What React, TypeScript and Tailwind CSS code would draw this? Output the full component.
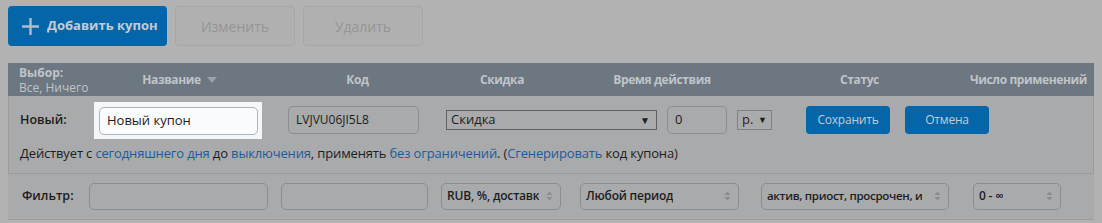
import React from "react";

const font = { fontFamily: '"Open Sans", "Noto Sans", sans-serif' };

function UpDown() {
  return (
    <svg width="7" height="10" viewBox="0 0 7 10" className="shrink-0">
      <path d="M0.5 4 L3.5 0.5 L6.5 4 Z" fill="#8a8d90" />
      <path d="M0.5 6 L3.5 9.5 L6.5 6 Z" fill="#8a8d90" />
    </svg>
  );
}

function FilterSelect({
  text,
  className,
  textClass = "",
}: {
  text: string;
  className: string;
  textClass?: string;
}) {
  return (
    <div
      className={
        "flex h-[27px] items-center justify-between gap-[4px] rounded-[5px] border border-[#8b8e91] pl-[5px] pr-[7px] text-[12px] font-semibold tracking-[-0.2px] text-[#1d1d1d] " +
        className
      }
    >
      <span className={"overflow-hidden whitespace-nowrap " + textClass}>{text}</span>
      <UpDown />
    </div>
  );
}

export default function App() {
  return (
    <div className="min-h-[223px] w-full bg-[#b2b2b2] px-2 pt-[6px]" style={font}>
      {/* Кнопки */}
      <div className="flex gap-2">
        <button className="flex h-[40px] w-[159px] items-center gap-[8px] rounded-[4px] bg-[#0565a9] pl-[14px] text-[13px] font-bold text-[#c3ccd5]">
          <svg width="17" height="17" viewBox="0 0 17 17">
            <path d="M8.5 0 V17 M0 8.5 H17" stroke="#aebccb" strokeWidth="2.4" />
          </svg>
          Добавить купон
        </button>
        <button className="h-[40px] w-[120px] rounded-[4px] border border-[#a6a6a6] bg-[#b0b0b0] text-[14px] text-[#959595]">
          Изменить
        </button>
        <button className="h-[40px] w-[120px] rounded-[4px] border border-[#a6a6a6] bg-[#b0b0b0] text-[14px] text-[#959595]">
          Удалить
        </button>
      </div>

      {/* Заголовок таблицы */}
      <div className="mt-[17px] flex h-[33px] items-center bg-[#6d7782] text-[12px] font-bold tracking-[-0.4px] text-[#bfc4c9]">
        <div className="w-[100px] pl-[11px] leading-[15px] tracking-normal">
          <div className="font-bold">Выбор:</div>
          <div className="font-normal">Все, Ничего</div>
        </div>
        <div className="flex w-[143px] items-center justify-center gap-[6px]">
          Название
          <svg width="10" height="6" viewBox="0 0 10 6">
            <path d="M0 0 H10 L5 6 Z" fill="#9aa3ab" />
          </svg>
        </div>
        <div className="w-[213px] text-center">Код</div>
        <div className="w-[76px] text-center">Скидка</div>
        <div className="w-[244px] text-center">Время действия</div>
        <div className="w-[151px] text-center">Статус</div>
        <div className="flex-1 pr-[7px] text-right">Число применений</div>
      </div>

      {/* Новый купон */}
      <div className="h-[78px] border-x border-b border-[#9a9c9e] bg-[#a9aaab] pl-[11px] pt-[5px] text-[13px] text-[#1d1d1d]">
        <div className="flex h-[38px] items-center">
          <div className="w-[74px] text-[12.5px] font-semibold">Новый:</div>
          <div className="w-[168px] bg-[#f5f6f7] pb-[4px] pl-[5px] pr-[4px] pt-[5px]">
            <div className="flex h-[28px] items-center rounded-[5px] border border-[#a9b5c1] bg-[#fafbfc] px-[7px] text-[#1a1a1a]">
              Новый купон
            </div>
          </div>
          <div className="ml-[26px] flex h-[28px] w-[131px] items-center rounded-[5px] border border-[#8b8e91] px-[7px] text-[12px] text-[#1d1d1d]">
            LVJVU06JI5L8
          </div>
          <div className="ml-[27px] flex h-[20px] w-[211px] items-center justify-between border border-[#5e6163] pl-[4px] pr-[6px]">
            <span>Скидка</span>
            <span className="text-[10px]">▼</span>
          </div>
          <div className="ml-[10px] flex h-[28px] w-[60px] items-center rounded-[5px] border border-[#8b8e91] px-[7px]">
            0
          </div>
          <div className="ml-[10px] flex h-[20px] w-[35px] items-center justify-between border border-[#808385] pl-[4px] pr-[4px]">
            <span className="text-[#3a1530]">р.</span>
            <span className="text-[9px]">▼</span>
          </div>
          <button className="ml-[34px] h-[28px] w-[84px] rounded-[4px] bg-[#0565a9] text-[12px] tracking-[-0.2px] text-[#c3ccd5]">
            Сохранить
          </button>
          <button className="ml-[15px] h-[28px] w-[84px] rounded-[4px] bg-[#0565a9] text-[12px] tracking-[-0.2px] text-[#c3ccd5]">
            Отмена
          </button>
        </div>
        <div className="mt-[5px] leading-[18px] tracking-[-0.15px]">
          Действует с <span className="text-[#1d5c97]">сегодняшнего дня</span> до{" "}
          <span className="text-[#1d5c97]">выключения</span>, применять{" "}
          <span className="text-[#1d5c97]">без ограничений</span>. (
          <span className="text-[#1d5c97]">Сгенерировать</span> код купона)
        </div>
      </div>

      {/* Фильтр */}
      <div className="flex h-[46px] items-center border-b border-[#9a9c9e] bg-[#a9aaab] pl-[14px] pb-[1px] text-[13px]">
        <div className="w-[67px] text-[12.5px] font-semibold text-[#1d1d1d]">Фильтр:</div>
        <div className="h-[27px] w-[179px] rounded-[5px] border border-[#8b8e91]" />
        <div className="ml-[13px] h-[27px] w-[147px] rounded-[5px] border border-[#8b8e91]" />
        <FilterSelect text="RUB, %, доставк" className="ml-[13px] w-[120px]" />
        <FilterSelect text="Любой период" className="ml-[19px] w-[159px]" />
        <FilterSelect
          text="актив, приост, просрочен, и"
          className="ml-[22px] w-[188px]"
          textClass="text-[11.5px] tracking-[-0.3px]"
        />
        <FilterSelect text="0 - ∞" className="ml-[24px] w-[88px]" />
      </div>
    </div>
  );
}
